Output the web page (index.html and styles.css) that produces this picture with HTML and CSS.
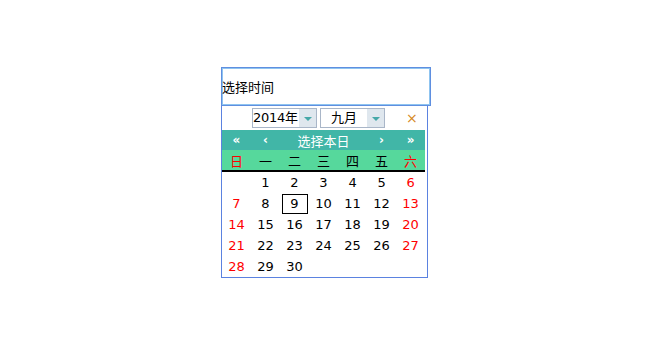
FILE: index.html
```html
<!DOCTYPE html>
<html lang="zh-CN">
<head>
  <meta charset="UTF-8" />
  <title>选择时间</title>
  <link rel="stylesheet" href="styles.css">
</head>
<body>
  <div class="picker">
    <input class="date-input" type="text" value="选择时间" />
    <div class="calendar">
      <div class="toolbar">
        <div class="fake-select year"><span class="val">2014年</span><span class="arrow"></span></div>
        <div class="fake-select month"><span class="val">九月</span><span class="arrow"></span></div>
        <span class="close">&times;</span>
      </div>
      <table class="grid">
        <colgroup>
          <col><col><col><col><col><col><col>
        </colgroup>
        <tr class="nav">
          <td>&laquo;</td>
          <td>&lsaquo;</td>
          <td colspan="3" class="today">选择本日</td>
          <td>&rsaquo;</td>
          <td>&raquo;</td>
        </tr>
        <tr class="week">
          <td class="weekend">日</td><td>一</td><td>二</td><td>三</td><td>四</td><td>五</td><td class="weekend">六</td>
        </tr>
        <tr>
          <td></td><td>1</td><td>2</td><td>3</td><td>4</td><td>5</td><td class="weekend">6</td>
        </tr>
        <tr>
          <td class="weekend">7</td><td>8</td><td><span class="current">9</span></td><td>10</td><td>11</td><td>12</td><td class="weekend">13</td>
        </tr>
        <tr>
          <td class="weekend">14</td><td>15</td><td>16</td><td>17</td><td>18</td><td>19</td><td class="weekend">20</td>
        </tr>
        <tr>
          <td class="weekend">21</td><td>22</td><td>23</td><td>24</td><td>25</td><td>26</td><td class="weekend">27</td>
        </tr>
        <tr>
          <td class="weekend">28</td><td>29</td><td>30</td><td></td><td></td><td></td><td></td>
        </tr>
      </table>
    </div>
  </div>
</body>
</html>
```

FILE: styles.css
```css
body {
  margin: 0;
  background: #fff;
  font-family: "DejaVu Sans", "Noto Sans CJK SC", sans-serif;
}

.picker {
  width: 210px;
  margin: 0 auto;
  padding-top: 67px;
  position: relative;
  left: 1px;
}

.date-input {
  display: block;
  box-sizing: border-box;
  width: 210px;
  height: 39px;
  margin: 0;
  padding: 0;
  border: 1px solid #5f8fe0;
  box-shadow: inset 0 0 0 1px #8fc4f0;
  font-family: "Noto Sans CJK SC", sans-serif;
  font-size: 13px;
  color: #000;
  outline: none;
}

.calendar {
  width: 205px;
  border: 1px solid #5b82e0;
  border-top: none;
  background: #fff;
}

.toolbar {
  display: flex;
  align-items: center;
  height: 24px;
  padding-left: 30px;
}

.fake-select {
  box-sizing: border-box;
  display: flex;
  height: 20px;
  border: 1px solid #a9b6c8;
  font-size: 13px;
  white-space: nowrap;
}

.fake-select .val {
  flex: 1;
  line-height: 18px;
  overflow: hidden;
}

.year { width: 65px; }
.year .val { letter-spacing: -0.3px; }
.month { width: 65px; margin-left: 3px; }
.month .val { padding-left: 10px; }

.fake-select .arrow {
  flex: none;
  width: 17px;
  background: #dfe7ee;
  position: relative;
}

.fake-select .arrow::after {
  content: "";
  position: absolute;
  left: 5px;
  top: 8px;
  border-left: 4px solid transparent;
  border-right: 4px solid transparent;
  border-top: 4px solid #45a8a8;
}

.close {
  margin-left: 21px;
  color: #d6891c;
  font-size: 14px;
  line-height: 20px;
}

.grid {
  border-collapse: collapse;
  width: 203px;
  table-layout: fixed;
  font-size: 13px;
}

.grid col {
  width: 29px;
}

.grid td {
  height: 21px;
  padding: 0;
  text-align: center;
  color: #000;
  white-space: nowrap;
}

.nav td {
  height: 20px;
  background: #41b6a7;
  color: #fff;
  font-weight: bold;
  font-size: 12px;
}

.nav .today {
  font-weight: normal;
  font-size: 13px;
  font-family: "Noto Sans CJK SC", sans-serif;
}

.week td {
  background: #56d89c;
  border-bottom: 2px solid #000;
  font-family: "Noto Sans CJK SC", sans-serif;
  height: 20px;
}

.grid td.weekend {
  color: #f00;
}

.current {
  display: inline-block;
  box-sizing: border-box;
  width: 26px;
  height: 20px;
  line-height: 18px;
  border: 1px solid #000;
}
```
